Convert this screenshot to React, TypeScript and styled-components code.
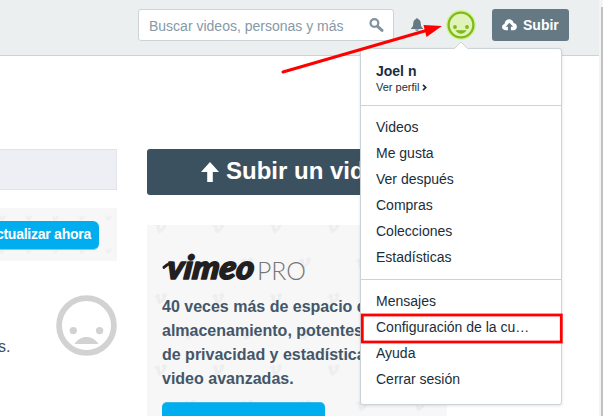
import React from "react";
import styled, { createGlobalStyle } from "styled-components";

const GlobalStyle = createGlobalStyle`
  *, *::before, *::after { box-sizing: border-box; }
  html, body { margin: 0; padding: 0; overflow: hidden; background: #fff; }
  body { font-family: "Liberation Sans", Arial, sans-serif; color: #1a2e3b; }
`;

const Page = styled.div`
  position: relative;
  display: flex;
  width: 603px;
  height: 416px;
  overflow: hidden;
`;

const Main = styled.div`
  width: 599px;
  flex: none;
`;

const ScrollTrack = styled.div`
  flex: 1;
  padding: 7px 0 0 2px;
  background: #f4f4f4;
`;

const ScrollThumb = styled.div`
  height: 100%;
  background: #c1c1c1;
`;

const Header = styled.header`
  display: flex;
  align-items: flex-start;
  height: 56px;
  padding: 9px 0 0 138px;
  background: #ebeff0;
  border-bottom: 1px solid #ccd4d8;
`;

const SearchBox = styled.div`
  display: flex;
  align-items: center;
  justify-content: space-between;
  width: 256px;
  height: 32px;
  padding: 2px 9px 0 10px;
  background: #fff;
  border: 1px solid #ccd4d8;
  border-radius: 3px;
  color: #8699a6;
  font-size: 14px;
  svg { position: relative; top: -1px; }
`;

const BellSlot = styled.div`
  margin: 9px 0 0 16px;
  width: 14px;
  height: 14px;
  svg { display: block; }
`;

const Avatar = styled.div`
  margin: 0 0 0 22px;
  width: 30px;
  height: 31px;
  svg { display: block; }
`;

const UploadButton = styled.button`
  display: flex;
  align-items: center;
  gap: 6px;
  width: 77px;
  height: 32px;
  margin: 0 0 0 16px;
  padding: 0 0 0 10px;
  border: 0;
  border-radius: 3px;
  background: #657985;
  color: #fff;
  font: bold 14px "Liberation Sans", Arial, sans-serif;
`;

const Content = styled.main`
  display: flex;
  gap: 30px;
  padding-top: 93px;
`;

const LeftColumn = styled.div`
  width: 117px;
  flex: none;
`;

const InputStrip = styled.div`
  height: 41px;
  background: #eeeff4;
  border: 1px solid #e2e3eb;
  border-left: 0;
`;

const UpgradeStrip = styled.section`
  position: relative;
  height: 53px;
  margin-top: 18px;
  padding-top: 13px;
  overflow: hidden;
  background: #f7f7f7;
`;

const UpgradeButton = styled.button`
  position: relative;
  display: flex;
  align-items: center;
  justify-content: flex-end;
  width: 99px;
  height: 29px;
  padding: 0 8px 2px 0;
  border: 0;
  border-bottom: 1px solid #79cdf4;
  border-radius: 0 6px 6px 0;
  background: #00adef;
  color: #fff;
  font: bold 14px "Liberation Sans", Arial, sans-serif;
  letter-spacing: -0.25px;
  white-space: nowrap;
`;

const EmptyState = styled.div`
  display: flex;
  align-items: flex-start;
  justify-content: space-between;
  margin-top: 34px;
  color: #3c5160;
  font-size: 16px;
  line-height: 20px;
  p { margin: 42px 0 0 -2px; }
`;

const RightColumn = styled.div`
  width: 300px;
  flex: none;
`;

const UploadBanner = styled.div`
  display: flex;
  align-items: center;
  gap: 7px;
  height: 46px;
  padding: 0 0 3px 54px;
  border-radius: 3px;
  background: #3c5160;
  color: #fff;
  font-size: 24px;
  font-weight: bold;
  white-space: nowrap;
  overflow: hidden;
  svg { position: relative; top: 1px; }
`;

const ProPanel = styled.section`
  position: relative;
  height: 220px;
  margin-top: 30px;
  padding: 23px 15px 0;
  background: #f7f7f7;
`;

const PatternLayer = styled.svg`
  position: absolute;
  inset: 0;
  width: 100%;
  height: 100%;
`;

const Logo = styled.svg`
  position: relative;
  display: block;
  overflow: visible;
`;

const ProText = styled.p`
  position: relative;
  margin: 7px 0 0;
  color: #44566a;
  font-size: 16px;
  font-weight: bold;
  line-height: 24px;
  white-space: pre;
  overflow: hidden;
`;

const ProButton = styled.div`
  position: relative;
  width: 163px;
  height: 40px;
  margin-top: 11px;
  border-radius: 5px;
  border-top: 1px solid #35b9ed;
  background: #00adef;
`;

const Menu = styled.nav`
  position: absolute;
  left: 360px;
  top: 48px;
  width: 202px;
  height: 357px;
  background: #fff;
  border: 1px solid #ccd4d8;
  border-radius: 3px;
  box-shadow: 0 1px 3px rgba(40, 60, 75, 0.14);
`;

const Pointer = styled.svg`
  position: absolute;
  left: 93px;
  top: -8px;
`;

const Profile = styled.div`
  height: 57px;
  padding: 14px 15px 0;
  border-bottom: 1px solid #ccd4d8;
`;

const UserName = styled.div`
  font-size: 14px;
  line-height: 17px;
  font-weight: bold;
`;

const ProfileLink = styled.div`
  display: flex;
  align-items: center;
  gap: 3px;
  font-size: 11px;
  line-height: 15px;
`;

const MenuGroup = styled.ul<{ $divided?: boolean }>`
  list-style: none;
  margin: 0;
  padding: ${(p) => (p.$divided ? "8px 15px 9px" : "8px 15px 0")};
  border-bottom: ${(p) => (p.$divided ? "1px solid #ccd4d8" : "0")};
`;

const MenuItem = styled.li`
  height: 26px;
  font-size: 14px;
  line-height: 26px;
  white-space: nowrap;
`;

const Annotation = styled.svg`
  position: absolute;
  inset: 0;
  pointer-events: none;
`;

const mark =
  "M0 3.5C2 1.6 4 0 5.3 1C6.3 2 6 6.2 6.7 7.3C7.2 7.8 9 5 9 3.7C8.7 2.8 8 3 7.4 3.2C8 .5 10 -.4 11.6 .1C14.8 1.1 12 7 7.4 10.7C5.5 12 4.2 11.2 3.5 9.3L2 3.8C1.8 3.3 1.2 4 .7 4.3Z";

const MarkPattern = ({ id, x, y, w, h, scale, staggered }: { id: string; x: number; y: number; w: number; h: number; scale: number; staggered?: boolean }) => (
  <PatternLayer aria-hidden="true">
    <defs>
      <pattern id={id} x={x} y={y} width={w} height={h} patternUnits="userSpaceOnUse">
        <g fill="#eeeef1">
          <path d={mark} transform={`scale(${scale})`} />
          {staggered && <path d={mark} transform={`translate(${w / 2} ${h / 2}) scale(${scale})`} />}
        </g>
      </pattern>
    </defs>
    <rect width="100%" height="100%" fill={`url(#${id})`} />
  </PatternLayer>
);

const SearchIcon = () => (
  <svg width="15" height="15" viewBox="0 0 15 15" fill="none" stroke="#82939e">
    <circle cx="5.4" cy="5" r="3.9" strokeWidth="2.2" />
    <path d="M8.6 8.4L13 12.4" strokeWidth="3" strokeLinecap="round" />
  </svg>
);

const HappyFace = () => (
  <svg width="30" height="31" viewBox="0 0 30 31">
    <circle cx="15" cy="16" r="15" fill="#d3f59a" />
    <circle cx="15" cy="16" r="12.4" fill="#e0f3b8" stroke="#7fb91b" strokeWidth="2.3" />
    <circle cx="9" cy="18" r="1.9" fill="#7fb91b" />
    <circle cx="21" cy="18" r="1.9" fill="#7fb91b" />
    <path d="M9.5 21.3H20.5C18 25.8 12 25.8 9.5 21.3Z" fill="#7fb91b" />
  </svg>
);

const SadFace = () => (
  <svg width="61" height="61" viewBox="0 0 61 61" fill="#d2d2d2">
    <circle cx="30.5" cy="30.5" r="27.4" fill="none" stroke="#d2d2d2" strokeWidth="5.8" />
    <circle cx="17.3" cy="35.6" r="3.7" />
    <circle cx="43.6" cy="35.6" r="3.7" />
    <path d="M18.5 49C24 39.5 37 39.5 42.5 49Z" />
  </svg>
);

const library = ["Videos", "Me gusta", "Ver después", "Compras", "Colecciones", "Estadísticas"];
const account = ["Mensajes", "Configuración de la cu…", "Ayuda", "Cerrar sesión"];

export default function App() {
  return (
    <>
      <GlobalStyle />
      <Page>
        <Main>
          <Header>
            <SearchBox>
              <span>Buscar videos, personas y más</span>
              <SearchIcon />
            </SearchBox>
            <BellSlot>
              <svg width="14" height="14" viewBox="0 0 14 14" fill="#657985">
                <path d="M6 1C6 0 8 0 8 1C10 1.7 10.7 3.5 10.8 6C10.9 8.3 11.5 9.2 13 10.2V11H1V10.2C2.5 9.2 3.1 8.3 3.2 6C3.3 3.5 4 1.7 6 1ZM5 11.5H9C8.5 13.2 5.5 13.2 5 11.5Z" />
              </svg>
            </BellSlot>
            <Avatar>
              <HappyFace />
            </Avatar>
            <UploadButton>
              <svg width="15" height="12" viewBox="0 0 15 12">
                <path d="M3.6 11.2C-.9 11.2-.9 5.8 2.5 5.1C2.8-.8 10.4-1.4 11.6 4C15.9 4.5 16 11.2 11.5 11.2Z" fill="#fff" />
                <path d="M7.4 3.8L11.1 7.7H8.9V12H5.9V7.7H3.7Z" fill="#657985" />
              </svg>
              Subir
            </UploadButton>
          </Header>
          <Content>
            <LeftColumn>
              <InputStrip />
              <UpgradeStrip>
                <MarkPattern id="small-marks" x={-1} y={7.5} w={26.6} h={33} scale={0.46} />
                <UpgradeButton>Actualizar ahora</UpgradeButton>
              </UpgradeStrip>
              <EmptyState>
                <p>s.</p>
                <SadFace />
              </EmptyState>
            </LeftColumn>
            <RightColumn>
              <UploadBanner>
                <svg width="18" height="20" viewBox="0 0 18 20" fill="#fff">
                  <path d="M9 0L18 10H11.8V20H6.2V10H0Z" />
                </svg>
                Subir un video
              </UploadBanner>
              <ProPanel>
                <MarkPattern id="large-marks" x={7} y={-3} w={57.6} h={71.2} scale={0.98} staggered />
                <Logo width="148" height="40" viewBox="0 0 148 40">
                  <g transform="translate(4 31) skewX(-7)">
                    <text
                      x="0"
                      y="0"
                      fontFamily="Lato, sans-serif"
                      fontSize="33"
                      fontWeight="900"
                      fontStyle="italic"
                      fill="#231f20"
                      stroke="#231f20"
                      strokeWidth="1.6"
                      strokeLinejoin="round"
                      textLength="87"
                      lengthAdjust="spacingAndGlyphs"
                    >
                      vimeo
                    </text>
                  </g>
                  <g fill="none" stroke="#231f20" strokeWidth="3" strokeLinecap="round">
                    <path d="M2 19.3Q5 16.2 9 15.2" />
                  </g>
                  <text
                    x="95"
                    y="32"
                    fontFamily="Lato, sans-serif"
                    fontSize="26"
                    fontWeight="300"
                    fill="#777"
                    textLength="49"
                    lengthAdjust="spacingAndGlyphs"
                  >
                    PRO
                  </text>
                </Logo>
                <ProText>{"40 veces más de espacio de\nalmacenamiento, potentes\nde privacidad y estadísticas\nvideo avanzadas."}</ProText>
                <ProButton />
              </ProPanel>
            </RightColumn>
          </Content>
        </Main>
        <ScrollTrack>
          <ScrollThumb />
        </ScrollTrack>
        <Menu>
          <Pointer width="14" height="9" viewBox="0 0 14 9">
            <path d="M0 9L0.5 7.5L7 1L13.5 7.5L14 9Z" fill="#fff" />
            <path d="M0.5 7.5L7 1L13.5 7.5" fill="none" stroke="#ccd4d8" />
          </Pointer>
          <Profile>
            <UserName>Joel n</UserName>
            <ProfileLink>
              Ver perfil
              <svg width="5" height="7" viewBox="0 0 5 7" fill="none" stroke="#1a2e3b" strokeWidth="1.7">
                <path d="M1 .8L3.7 3.5L1 6.2" />
              </svg>
            </ProfileLink>
          </Profile>
          <MenuGroup $divided>
            {library.map((label) => (
              <MenuItem key={label}>{label}</MenuItem>
            ))}
          </MenuGroup>
          <MenuGroup>
            {account.map((label) => (
              <MenuItem key={label}>{label}</MenuItem>
            ))}
          </MenuGroup>
        </Menu>
        <Annotation width="603" height="416" viewBox="0 0 603 416">
          <path d="M283 72L428 30" stroke="#f00" strokeWidth="3" strokeLinecap="round" />
          <path d="M442 26L423.5 25L426.5 37Z" fill="#f00" />
          <rect x="362.3" y="315" width="199" height="27" fill="none" stroke="#f00" strokeWidth="2.8" />
        </Annotation>
      </Page>
    </>
  );
}
